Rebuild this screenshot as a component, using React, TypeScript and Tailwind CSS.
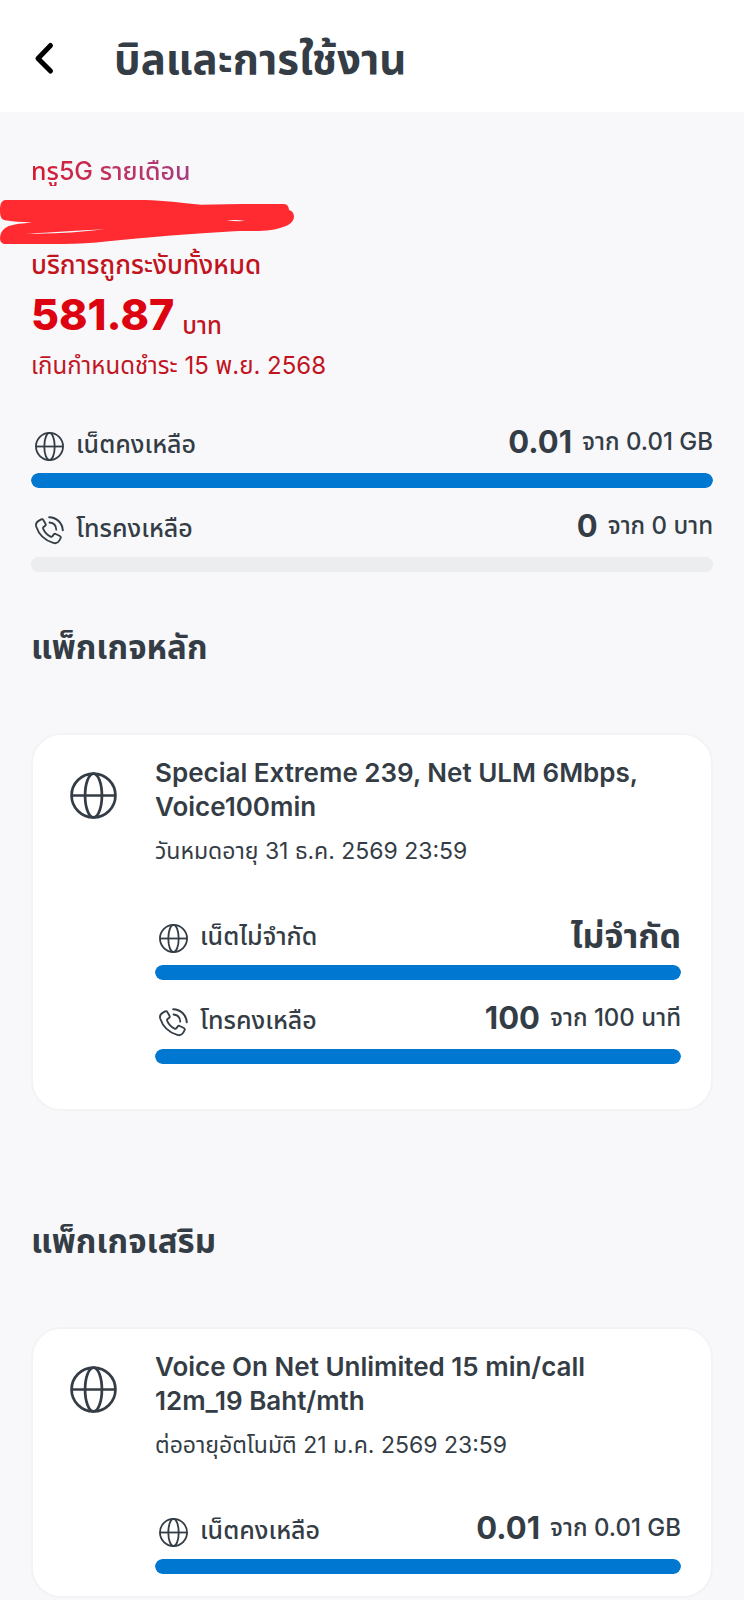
import React from 'react';
import clsx from 'clsx';

type Usage = {
  id: string;
  kind: 'net' | 'call';
  label: string;
  value: string;
  rest?: string;
  percent: number;
};

type Package = {
  name: string;
  expiry: string;
  usages: Usage[];
};

const totals: Usage[] = [
  { id: 'total-net', kind: 'net', label: 'เน็ตคงเหลือ', value: '0.01', rest: 'จาก 0.01 GB', percent: 100 },
  { id: 'total-call', kind: 'call', label: 'โทรคงเหลือ', value: '0', rest: 'จาก 0 บาท', percent: 0 },
];

const mainPackage: Package = {
  name: 'Special Extreme 239, Net ULM 6Mbps, Voice100min',
  expiry: 'วันหมดอายุ 31 ธ.ค. 2569 23:59',
  usages: [
    { id: 'main-net', kind: 'net', label: 'เน็ตไม่จำกัด', value: 'ไม่จำกัด', percent: 100 },
    { id: 'main-call', kind: 'call', label: 'โทรคงเหลือ', value: '100', rest: 'จาก 100 นาที', percent: 100 },
  ],
};

const extraPackage: Package = {
  name: 'Voice On Net Unlimited 15 min/call 12m_19 Baht/mth',
  expiry: 'ต่ออายุอัตโนมัติ 21 ม.ค. 2569 23:59',
  usages: [
    { id: 'extra-net', kind: 'net', label: 'เน็ตคงเหลือ', value: '0.01', rest: 'จาก 0.01 GB', percent: 100 },
  ],
};

const GlobeIcon: React.FC<{ className?: string }> = ({ className }) => (
  <svg viewBox="0 0 48 48" fill="none" stroke="currentColor" strokeWidth="2.8" className={className} aria-hidden="true">
    <circle cx="24" cy="24" r="22.4" />
    <ellipse cx="24" cy="24" rx="8.6" ry="22.4" />
    <path d="M1.6 24h44.8" />
  </svg>
);

const CallIcon: React.FC<{ className?: string }> = ({ className }) => (
  <svg
    viewBox="0 0 29 29"
    fill="none"
    stroke="currentColor"
    strokeWidth="1.8"
    strokeLinecap="round"
    strokeLinejoin="round"
    className={className}
    aria-hidden="true"
  >
    <path d="M4 4.6 6.2 3.4C7 3 7.8 3.2 8.3 4l2.2 3.7c.4.7.3 1.5-.3 2L8.6 11c-.6.5-.7 1.2-.4 1.9 1.500 3.500 4.300 6.300 7.400 7.700.7.300 1.400.1 1.900-.5l1.300-1.700c.5-.6 1.300-.8 2-.4l4 2c.9.500 1.200 1.400.8 2.200l-1.300 2.500c-1.200 2.200-3.600 2.900-6 2.200C9.900 24.400 3.700 18.300 1.200 10.500.5 8.100 1.600 5.900 4 4.600Z" />
    <path d="M14.500 6.500c4 .4 6.600 3.300 6.800 7.200" />
    <path d="M14.200 1.200c7.200.1 13.200 5.900 13.600 13.100" strokeWidth="2" />
  </svg>
);

const UsageRow: React.FC<{ usage: Usage }> = ({ usage }) => {
  return (
    <div>
      <div className="flex h-10 items-end justify-between">
        <div className="flex items-end gap-3 pl-1">
          {usage.kind === 'net' ? (
            <GlobeIcon className="size-[29px] shrink-0 stroke-3" />
          ) : (
            <CallIcon className="size-[29px] shrink-0" />
          )}
          <span id={usage.id} className="text-[25px]/[34px] font-medium">{usage.label}</span>
        </div>
        <p className="flex items-center gap-[10px] whitespace-nowrap">
          <span className={clsx('font-bold', usage.rest ? 'text-[31px]/[38px]' : 'text-[34px]/[34px]')}>
            {usage.value}
          </span>
          {usage.rest && <span className="text-2xl/8 font-medium">{usage.rest}</span>}
        </p>
      </div>
      <div
        role="progressbar"
        aria-labelledby={usage.id}
        aria-valuenow={usage.percent}
        className="mt-3 h-[15px] overflow-hidden rounded-full bg-[#ecedef]"
      >
        <div className="h-full rounded-full bg-[#0078d2]" style={{ width: `${usage.percent}%` }} />
      </div>
    </div>
  );
};

const PackageCard: React.FC<{ pkg: Package; className?: string }> = ({ pkg, className }) => (
  <article
    className={clsx('flex rounded-[30px] border-2 border-[#f3f3f5] bg-white pt-[21px] pr-[30px] pl-[37px]', className)}
  >
    <GlobeIcon className="mt-4 mr-[38px] size-[47px] shrink-0" />
    <div className="min-w-0 flex-1">
      <h3 className="pr-9 text-[26px]/[34px] font-semibold">{pkg.name}</h3>
      <p className="mt-[11px] text-[23px]/8">{pkg.expiry}</p>
      <div className="mt-[46px] flex flex-col gap-[17px]">
        {pkg.usages.map((usage) => (
          <UsageRow key={usage.id} usage={usage} />
        ))}
      </div>
    </div>
  </article>
);

export default function App() {
  return (
    <div className="bg-[#f8f8fb] pb-[3px] font-['Inter','Noto_Sans_Thai','Noto_Sans',sans-serif] text-[#343d45]">
      <header className="flex h-28 items-center gap-14 bg-white pt-[6px] pl-[31px]">
        <button type="button" aria-label="ย้อนกลับ" className="text-black">
          <svg viewBox="0 0 27 36" fill="none" stroke="currentColor" strokeWidth="5" strokeLinecap="round" strokeLinejoin="round" className="h-9 w-[27px]">
            <path d="M19.500 4.500 7 17.500l12.500 12.500" />
          </svg>
        </button>
        <h1 className="text-[42px]/[56px] font-bold">บิลและการใช้งาน</h1>
      </header>

      <main className="px-[31px] pt-[43px]">
        <p>
          <span className="bg-linear-to-r from-[#d8142a] to-[#a83a80] bg-clip-text text-[25px]/8 font-medium text-transparent">
            ทรู5G รายเดือน
          </span>
        </p>

        {/* marker strokes over the phone number */}
        <svg viewBox="0 0 294 44" className="mt-[13px] -ml-[31px] h-11 w-[294px]" aria-hidden="true">
          <path
            fill="#ff2b30"
            d="M5 0H145c20 .4 35 3 56 4.700C225 4 255 3.700 284 4c3 .3 5 2.500 5 6 3.500 1 5 3.500 5 7-.5 7-10 11-23 13-11 1.700-24 .4-37 1.200-42 2.300-84 6-126 10-16 1.700-30 2.800-45 2.800H5c-3 0-5-2.500-5-6 .5-8 6-12 15-13.500 5-.8 10-1.300 17-1.900-11-.6-20-1-27-2.300C1 19.500 0 16 0 10 0 5 1 1 5 0Z"
          />
          <path fill="#f8f8fb" d="M25 33.500c25-1 52-3 80-4.300-27 2.800-52 5.100-80 4.300ZM227 20.300c6-.5 13-.2 18 .8-6 .3-12 .1-18-.8Z" />
        </svg>

        <section className="mt-[5px] text-[#c1141e]">
          <p className="text-[26px]/8 font-medium">บริการถูกระงับทั้งหมด</p>
          <p className="mt-[5px] flex items-end gap-2">
            <span className="text-[43px]/[56px] font-extrabold text-[#dc0410]">581.87</span>
            <span className="text-2xl/8 font-medium">บาท</span>
          </p>
          <p className="mt-2 text-2xl/8">เกินกำหนดชำระ 15 พ.ย. 2568</p>
        </section>

        <section className="mt-[39px] flex flex-col gap-[17px]">
          {totals.map((usage) => (
            <UsageRow key={usage.id} usage={usage} />
          ))}
        </section>

        <section className="mt-[55px]">
          <h2 className="text-[33px]/10 font-bold">แพ็กเกจหลัก</h2>
          <PackageCard pkg={mainPackage} className="mt-[66px] pb-[45px]" />
        </section>

        <section className="mt-[110px]">
          <h2 className="text-[33px]/10 font-bold">แพ็กเกจเสริม</h2>
          <PackageCard pkg={extraPackage} className="mt-[66px] pb-[22px]" />
        </section>
      </main>
    </div>
  );
}
